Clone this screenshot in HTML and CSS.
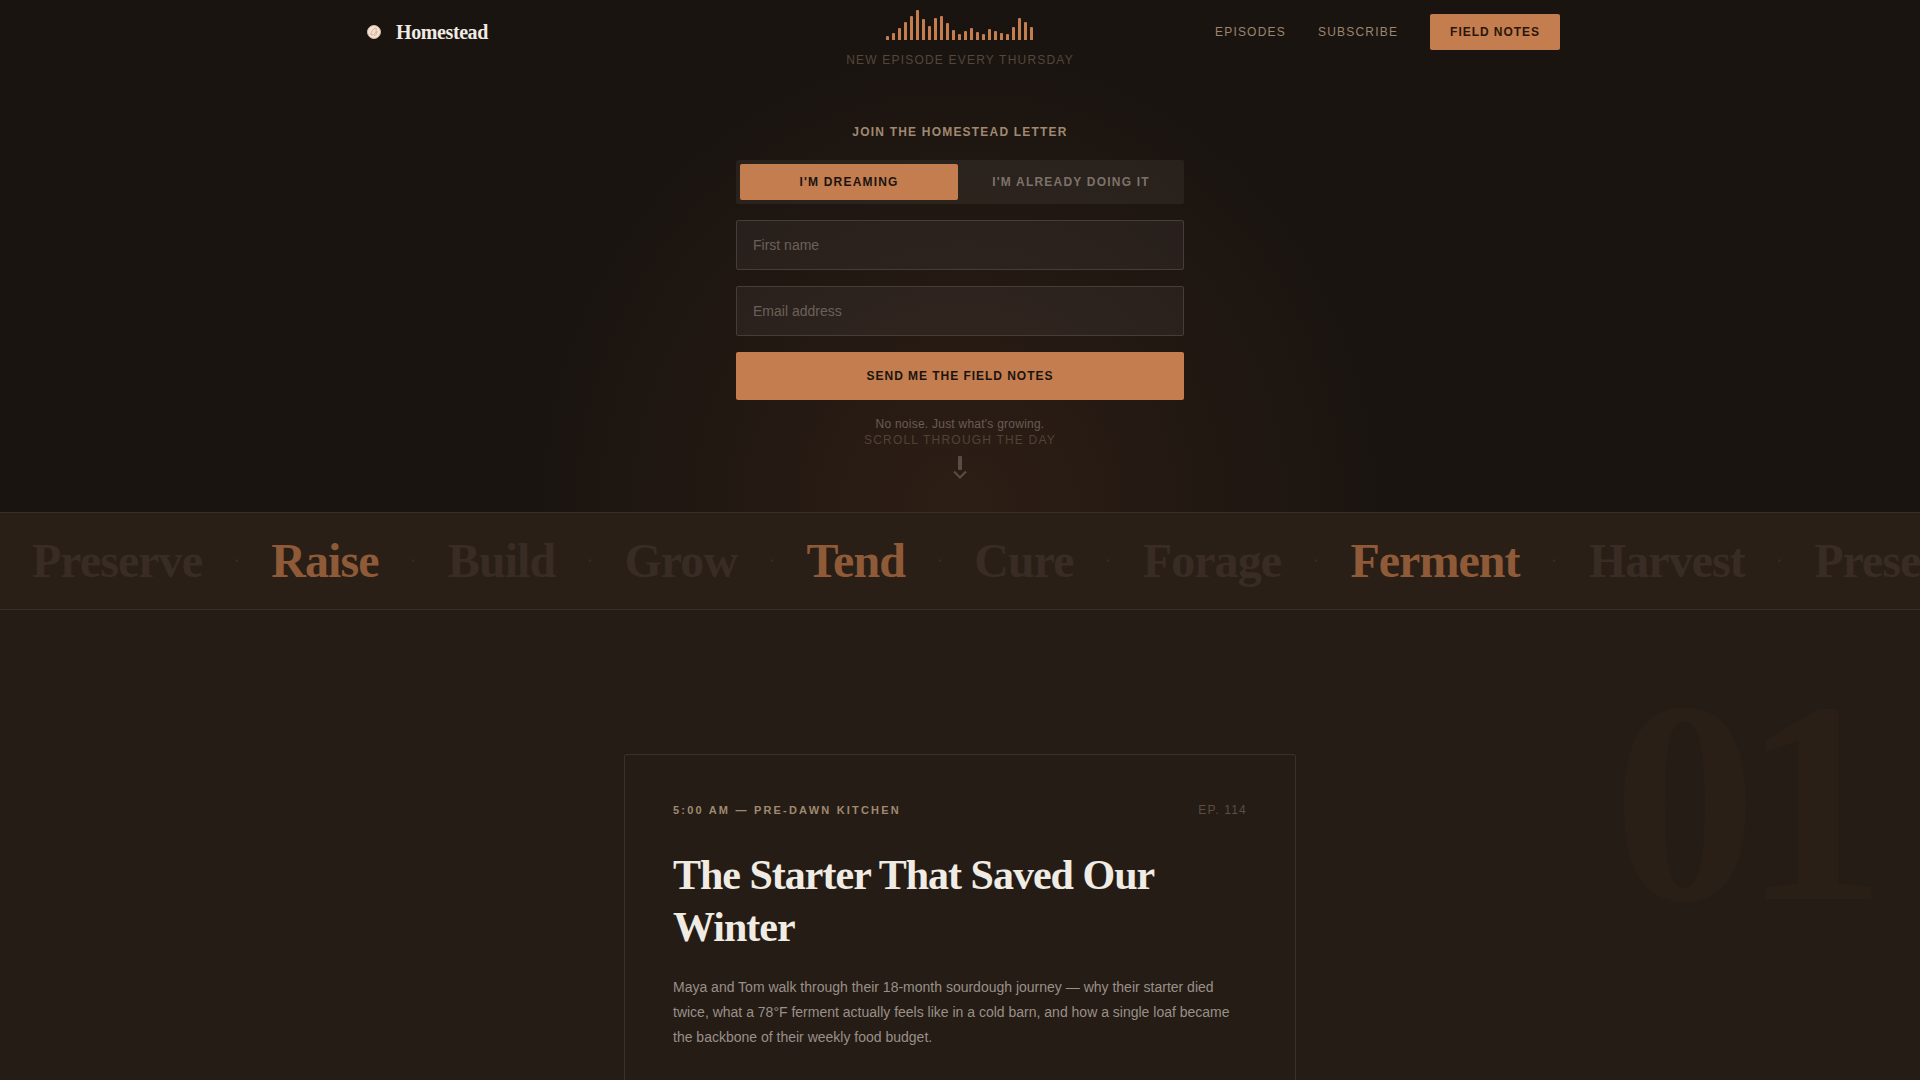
FILE: index.html
```html
<!DOCTYPE html>
<html lang="en">

<head>
    <meta charset="UTF-8">
    <meta name="viewport" content="width=device-width, initial-scale=1.0">
    <title>Homestead</title>
    <link rel="stylesheet" href="styles.css">
</head>

<body>

    <!-- Hero -->
    <div class="hero">
        <header class="header">
            <a class="logo" href="#">
                <svg class="logo-mark" viewBox="0 0 28 28" aria-hidden="true">
                    <circle cx="14" cy="14" r="6.500" fill="#f3e3d6" stroke="#dcb9a0" stroke-width="1"/>
                    <path d="M11 17c0-4 2-6 5-7 1 4-1 7-5 7zM14 18c2-1 3-2 3-5" fill="none" stroke="#dcae90" stroke-width="1"/>
                </svg>
                Homestead
            </a>
            <div class="broadcast">
                <div class="wave" id="wave"></div>
                <p class="wave-label">New episode every Thursday</p>
            </div>
            <nav class="nav">
                <a href="#episodes">Episodes</a>
                <a href="#subscribe">Subscribe</a>
                <a class="nav-btn" href="#notes">Field Notes</a>
            </nav>
        </header>

        <form class="signup" id="subscribe">
            <h2>Join the Homestead Letter</h2>
            <div class="toggle">
                <button type="button" class="active">I'm dreaming</button>
                <button type="button">I'm already doing it</button>
            </div>
            <input type="text" placeholder="First name" aria-label="First name">
            <input type="email" placeholder="Email address" aria-label="Email address">
            <button type="submit" class="submit">Send me the field notes</button>
            <p class="note">No noise. Just what's growing.</p>
        </form>

        <div class="scroll-hint">
            <span>Scroll through the day</span>
            <svg width="16" height="24" viewBox="0 0 16 24" aria-hidden="true">
                <rect x="6" y="0" width="4" height="14" rx="1"/>
                <path d="M2 15.500l6 6 6-6" fill="none" stroke-width="2"/>
            </svg>
        </div>
    </div>

    <!-- Marquee -->
    <div class="marquee">
        <span>Preserve</span><i>·</i>
        <span class="hot">Raise</span><i>·</i>
        <span>Build</span><i>·</i>
        <span>Grow</span><i>·</i>
        <span class="hot">Tend</span><i>·</i>
        <span>Cure</span><i>·</i>
        <span>Forage</span><i>·</i>
        <span class="hot">Ferment</span><i>·</i>
        <span>Harvest</span><i>·</i>
        <span>Preserve</span>
    </div>

    <!-- Episodes -->
    <section class="chapter" id="episodes">
        <div class="chapter-number">01</div>
        <article class="card">
            <div class="card-meta">
                <span class="time">5:00 AM — Pre-dawn kitchen</span>
                <span class="episode">EP. 114</span>
            </div>
            <h1>The Starter That Saved Our Winter</h1>
            <p>Maya and Tom walk through their 18-month sourdough journey — why their starter died twice, what a 78°F ferment actually feels like in a cold barn, and how a single loaf became the backbone of their weekly food budget.</p>
        </article>
    </section>

    <script>
        const levels = [4, 7, 12, 18, 24, 30, 21, 14, 22, 24, 17, 10, 6, 9, 12, 8, 6, 11, 9, 7, 6, 13, 22, 18, 13];
        const wave = document.getElementById('wave');

        levels.forEach(level => {
            wave.innerHTML += `<span style="height: ${level}px"></span>`;
        });

        const options = document.querySelectorAll('.toggle button');
        options.forEach(option => {
            option.addEventListener('click', () => {
                options.forEach(o => o.classList.remove('active'));
                option.classList.add('active');
            });
        });
    </script>

</body>

</html>
```
FILE: styles.css
```css
* {
    box-sizing: border-box;
    margin: 0;
    padding: 0;
}

body {
    font-family: "Liberation Sans", Arial, sans-serif;
    background: #1a1410;
    color: #f0ebe3;
    overflow-x: hidden;
}

a {
    text-decoration: none;
}

button {
    font-family: inherit;
    border: none;
    cursor: pointer;
}

/* Hero */
.hero {
    padding-bottom: 32px;
    background: radial-gradient(420px 460px at 50% 100%, #2d1e15 0%, #1a1410 100%);
}

.header {
    display: grid;
    grid-template-columns: 1fr auto 1fr;
    align-items: start;
    max-width: 1200px;
    margin: 0 auto;
}

.logo {
    display: flex;
    align-items: center;
    gap: 8px;
    height: 64px;
    font-family: "Liberation Serif", "Times New Roman", serif;
    font-size: 20px;
    font-weight: bold;
    letter-spacing: -0.02em;
    color: #f0ebe3;
}

.logo-mark {
    width: 28px;
    height: 28px;
}

.broadcast {
    padding-top: 10px;
    text-align: center;
}

.wave {
    display: flex;
    justify-content: center;
    align-items: flex-end;
    gap: 3px;
    height: 30px;
}

.wave span {
    width: 3px;
    background: #c47d4e;
    border-radius: 1px 1px 0 0;
}

.wave-label {
    margin-top: 12px;
    font-size: 12px;
    line-height: 16px;
    letter-spacing: 0.1em;
    text-transform: uppercase;
    color: #54463c;
}

.nav {
    display: flex;
    justify-content: flex-end;
    align-items: center;
    gap: 32px;
    height: 64px;
    font-size: 12px;
    letter-spacing: 0.1em;
    text-transform: uppercase;
}

.nav a {
    color: #9a856f;
}

.nav .nav-btn {
    padding: 0 20px;
    line-height: 36px;
    font-weight: bold;
    letter-spacing: 0.08em;
    color: #2a160b;
    background: #c47d4e;
    border-radius: 2px;
}

/* Signup form */
.signup {
    display: flex;
    flex-direction: column;
    gap: 16px;
    max-width: 448px;
    margin: 56px auto 0;
    text-align: center;
}

.signup h2 {
    margin-bottom: 4px;
    font-size: 12px;
    line-height: 16px;
    letter-spacing: 0.1em;
    text-transform: uppercase;
    color: #a08970;
}

.toggle {
    display: flex;
    gap: 4px;
    padding: 4px;
    background: rgba(240, 235, 227, 0.06);
    border-radius: 2px;
}

.toggle button {
    flex: 1;
    height: 36px;
    font-size: 12px;
    font-weight: bold;
    letter-spacing: 0.1em;
    text-transform: uppercase;
    color: #7d726a;
    background: transparent;
    border-radius: 2px;
}

.toggle .active {
    color: #1a1410;
    background: #c47d4e;
}

.signup input {
    height: 50px;
    padding: 0 16px;
    font-family: inherit;
    font-size: 14px;
    color: #f0ebe3;
    background: rgba(240, 235, 227, 0.05);
    border: 1px solid #463d37;
    border-radius: 2px;
}

.signup input::placeholder {
    color: #6b6059;
}

.submit {
    height: 48px;
    font-size: 12px;
    font-weight: bold;
    letter-spacing: 0.08em;
    text-transform: uppercase;
    color: #1a1410;
    background: #c47d4e;
    border-radius: 2px;
}

.note {
    font-size: 12px;
    line-height: 16px;
    letter-spacing: 0.02em;
    color: #695d55;
}

.scroll-hint {
    display: flex;
    flex-direction: column;
    align-items: center;
    gap: 8px;
    font-size: 12px;
    line-height: 16px;
    letter-spacing: 0.1em;
    text-transform: uppercase;
    color: #524236;
}

.scroll-hint svg {
    fill: #5b4d43;
    stroke: #5b4d43;
}

.scroll-hint rect {
    stroke: none;
}

/* Marquee */
.marquee {
    display: flex;
    gap: 32px;
    padding: 24px 32px;
    overflow: hidden;
    white-space: nowrap;
    font-family: "Liberation Serif", "Times New Roman", serif;
    font-size: 48px;
    font-weight: bold;
    line-height: 48px;
    color: #382c24;
    background: #2a1f16;
    border-top: 1px solid #392e25;
    border-bottom: 1px solid #392e25;
}

.marquee span {
    letter-spacing: -0.02em;
}

.marquee .hot {
    color: #8f5a38;
}

.marquee i {
    font-size: 16px;
    font-style: normal;
}

/* Chapter */
.chapter {
    position: relative;
    padding: 144px 24px;
    background: #251c16;
}

.chapter-number {
    position: absolute;
    top: 48px;
    right: 48px;
    font-family: "Liberation Serif", "Times New Roman", serif;
    font-size: 288px;
    font-weight: bold;
    line-height: 1;
    letter-spacing: -0.05em;
    color: #2a1f16;
}

.card {
    position: relative;
    max-width: 672px;
    margin: 0 auto;
    padding: 48px;
    border: 1px solid #3a3029;
    border-radius: 2px;
}

.card-meta {
    display: flex;
    justify-content: space-between;
    align-items: center;
    margin-bottom: 32px;
    line-height: 14px;
}

.time {
    font-size: 11px;
    font-weight: bold;
    letter-spacing: 0.2em;
    text-transform: uppercase;
    color: #a08970;
}

.episode {
    font-size: 12px;
    letter-spacing: 0.1em;
    color: #5b4d43;
}

.card h1 {
    margin-bottom: 22px;
    font-family: "Liberation Serif", "Times New Roman", serif;
    font-size: 42px;
    line-height: 52px;
    letter-spacing: -1px;
}

.card p {
    font-size: 14px;
    line-height: 25px;
    color: #9a9088;
}
```
